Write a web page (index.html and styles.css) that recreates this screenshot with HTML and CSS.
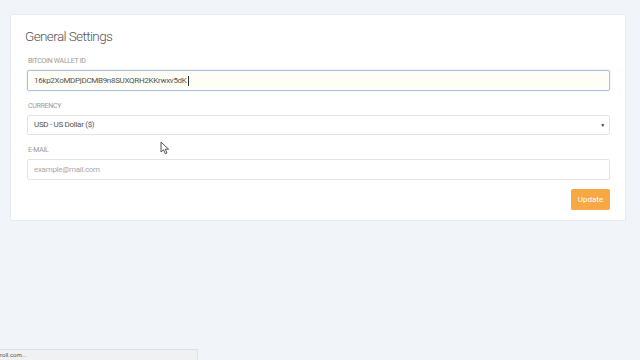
FILE: index.html
```html
<!DOCTYPE html>
<html lang="en">
<head>
    <meta charset="UTF-8">
    <meta name="viewport" content="width=device-width, initial-scale=1.0">
    <title>General Settings</title>
    <link rel="stylesheet" href="styles.css">
</head>
<body>
    <div class="card">
        <h2 class="card-title">General Settings</h2>

        <div class="field">
            <label>Bitcoin Wallet ID</label>
            <div class="input focused">16kp2XoMDPjDCMB9n8SUXQRH2KKrwxv5dK<span class="caret"></span></div>
        </div>

        <div class="field">
            <label>Currency</label>
            <div class="input select">
                <span>USD - US Dollar ($)</span>
                <span class="arrow">&#9660;</span>
            </div>
        </div>

        <div class="field">
            <label>E-mail</label>
            <div class="input placeholder">example@mail.com</div>
        </div>

        <div class="actions">
            <button class="btn-update">Update</button>
        </div>
    </div>

    <!-- mouse pointer over the currency field -->
    <svg class="cursor" width="10" height="14" viewBox="0 0 10 14">
        <path d="M1 1 L1 11 L3.5 8.8 L5.4 12.8 L7 12 L5.2 8.2 L8.6 8.2 Z" fill="#fff" stroke="#555" stroke-width="1" stroke-linejoin="round"/>
    </svg>

    <div class="status-bar">roll.com...</div>
</body>
</html>
```

FILE: styles.css
```css
body {
    margin: 0;
    padding: 14px 14px 0 10px;
    background-color: #f1f4f9;
    font-family: Roboto, "Liberation Sans", Arial, sans-serif;
    height: 360px;
    box-sizing: border-box;
    overflow: hidden;
}

.card {
    width: 616px;
    box-sizing: border-box;
    padding: 11px 15px 10px 16px;
    background: #fff;
    border: 1px solid #e8ebef;
    border-radius: 2px;
}

.card-title {
    margin: 0 0 10px -2px;
    font-size: 13.5px;
    line-height: 20px;
    font-weight: 300;
    color: #555;
    letter-spacing: -0.6px;
}

.field {
    margin-bottom: 10px;
}

.field label {
    display: block;
    font-size: 7px;
    line-height: 10px;
    color: #9a9a9a;
    text-transform: uppercase;
    letter-spacing: -0.3px;
    margin-bottom: 4px;
    padding-left: 1px;
}

.input {
    height: 20px;
    box-sizing: border-box;
    border: 1px solid #e2e4e7;
    border-radius: 2px;
    padding: 0 7px 0 6px;
    font-size: 8px;
    line-height: 18px;
    color: #555;
    letter-spacing: -0.3px;
    display: flex;
    align-items: center;
}

.input.focused {
    height: 21px;
    border-color: #a8c4de;
    background: #fefef7;
    box-shadow: 0 0 2px rgba(120, 160, 200, 0.35);
}

.caret {
    display: inline-block;
    width: 1px;
    height: 10px;
    background: #333;
    margin-left: 1px;
}

.select {
    justify-content: space-between;
}

.select .arrow {
    font-size: 5px;
    color: #333;
    margin-right: -3px;
}

.placeholder {
    color: #aaa;
    height: 21px;
}

.actions {
    display: flex;
    justify-content: flex-end;
    margin-top: -1px;
}

.btn-update {
    height: 21px;
    width: 39px;
    padding: 0;
    border: none;
    border-radius: 2px;
    background: #f5a844;
    color: #fff;
    font-family: Roboto, "Liberation Sans", Arial, sans-serif;
    font-size: 8px;
}

.cursor {
    position: absolute;
    left: 160px;
    top: 141px;
}

.status-bar {
    position: fixed;
    left: 0;
    bottom: 0;
    width: 198px;
    height: 11px;
    box-sizing: border-box;
    background: #f0f1f3;
    border-top: 1px solid #dfe3e8;
    border-right: 1px solid #dfe3e8;
    font-size: 6px;
    line-height: 10px;
    color: #555;
}
```
